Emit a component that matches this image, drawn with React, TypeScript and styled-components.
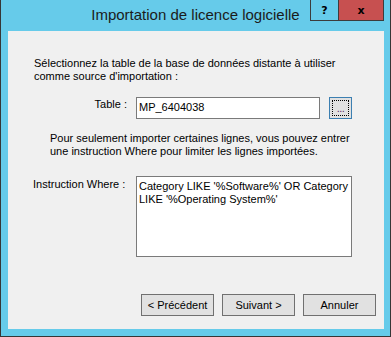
import React from 'react'
import styled, { createGlobalStyle } from 'styled-components'

const GlobalStyle = createGlobalStyle`
  html, body {
    margin: 0;
    padding: 0;
    background: #ffffff;
  }
  body {
    font-family: "Liberation Sans", Arial, sans-serif;
    font-size: 11px;
    color: #000;
  }
`

const Window = styled.div`
  width: 391px;
  height: 337px;
  box-sizing: border-box;
  background: #66cbea;
  border: 1px solid #363636;
  border-top: none;
  display: flex;
  flex-direction: column;
`

const TitleBar = styled.div`
  height: 31px;
  display: grid;
  grid-template-columns: 1fr auto 1fr;
  align-items: start;
`

const Title = styled.div`
  grid-column: 2;
  font-family: "Liberation Sans", Arial, sans-serif;
  font-size: 15px;
  line-height: 18px;
  padding-top: 6px;
  color: #1b1b1b;
  white-space: nowrap;
`

const CaptionButtons = styled.div`
  grid-column: 3;
  justify-self: end;
  display: flex;
  margin-right: 6px;
`

const CaptionButton = styled.div<{ $close?: boolean; $w: number }>`
  width: ${p => p.$w}px;
  height: 21px;
  box-sizing: border-box;
  border: 1px solid #3c3c3c;
  border-top: none;
  margin-left: ${p => (p.$close ? '-1px' : '0')};
  background: ${p => (p.$close ? '#c75050' : '#66cbea')};
  display: flex;
  align-items: center;
  justify-content: center;
  font-family: "DejaVu Sans", sans-serif;
  font-weight: bold;
  font-size: 11px;
  color: #000;
`

const Client = styled.div`
  flex: 1;
  margin: 0 6px 7px 7px;
  background: #f0f0f0;
  display: flex;
  flex-direction: column;
  padding: 26px 8px 13px 25px;
`

const Text = styled.p<{ $indent?: number }>`
  margin: 0;
  padding-left: ${p => p.$indent || 0}px;
  line-height: 12.5px;
`

const FieldRow = styled.div<{ $top: number }>`
  display: flex;
  align-items: flex-start;
  margin-top: ${p => p.$top}px;
`

const Label = styled.label<{ $right?: boolean }>`
  width: 94px;
  text-align: ${p => (p.$right ? 'right' : 'left')};
  padding-top: ${p => (p.$right ? 1 : 2)}px;
  line-height: 12.5px;
  margin-right: 9px;
  white-space: nowrap;
`

const TextBox = styled.div<{ $w: number; $h: number }>`
  width: ${p => p.$w}px;
  height: ${p => p.$h}px;
  box-sizing: border-box;
  border: 1px solid #7a7a7a;
  background: #fff;
  padding: 3px 2px;
  line-height: 13px;
`

const BrowseButton = styled.div`
  width: 23px;
  height: 22px;
  margin-left: 9px;
  box-sizing: border-box;
  border: 1px solid #3c7fb1;
  background: #e1e1e1;
  padding: 2px;
`

const FocusRect = styled.div`
  height: 100%;
  box-sizing: border-box;
  border: 1px dotted #000;
  display: flex;
  align-items: flex-end;
  justify-content: center;
  font-size: 11px;
  line-height: 13px;
  letter-spacing: -0.5px;
  color: #5a2a6a;
`

const ButtonBar = styled.div`
  margin-top: auto;
  display: flex;
  justify-content: flex-end;
  gap: 8px;
`

const Button = styled.div`
  width: 73px;
  height: 22px;
  box-sizing: border-box;
  border: 1px solid #707070;
  background: #e1e1e1;
  display: flex;
  align-items: center;
  justify-content: center;
  font-size: 11px;
`

export default function App() {
  return (
    <>
      <GlobalStyle />
      <Window>
        <TitleBar>
          <Title>Importation de licence logicielle</Title>
          <CaptionButtons>
            <CaptionButton $w={29}>?</CaptionButton>
            <CaptionButton $w={46} $close>x</CaptionButton>
          </CaptionButtons>
        </TitleBar>
        <Client>
          <Text $indent={1}>
            Sélectionnez la table de la base de données distante à utiliser
            <br />
            comme source d'importation :
          </Text>
          <FieldRow $top={15}>
            <Label $right>Table :</Label>
            <TextBox $w={184} $h={22}>MP_6404038</TextBox>
            <BrowseButton>
              <FocusRect>...</FocusRect>
            </BrowseButton>
          </FieldRow>
          <Text $indent={17} style={{ marginTop: 13 }}>
            Pour seulement importer certaines lignes, vous pouvez entrer
            <br />
            une instruction Where pour limiter les lignes importées.
          </Text>
          <FieldRow $top={19}>
            <Label>Instruction Where :</Label>
            <TextBox $w={216} $h={81}>
              Category LIKE '%Software%' OR Category
              <br />
              LIKE '%Operating System%'
            </TextBox>
          </FieldRow>
          <ButtonBar>
            <Button>&lt; Précédent</Button>
            <Button>Suivant &gt;</Button>
            <Button>Annuler</Button>
          </ButtonBar>
        </Client>
      </Window>
    </>
  )
}
